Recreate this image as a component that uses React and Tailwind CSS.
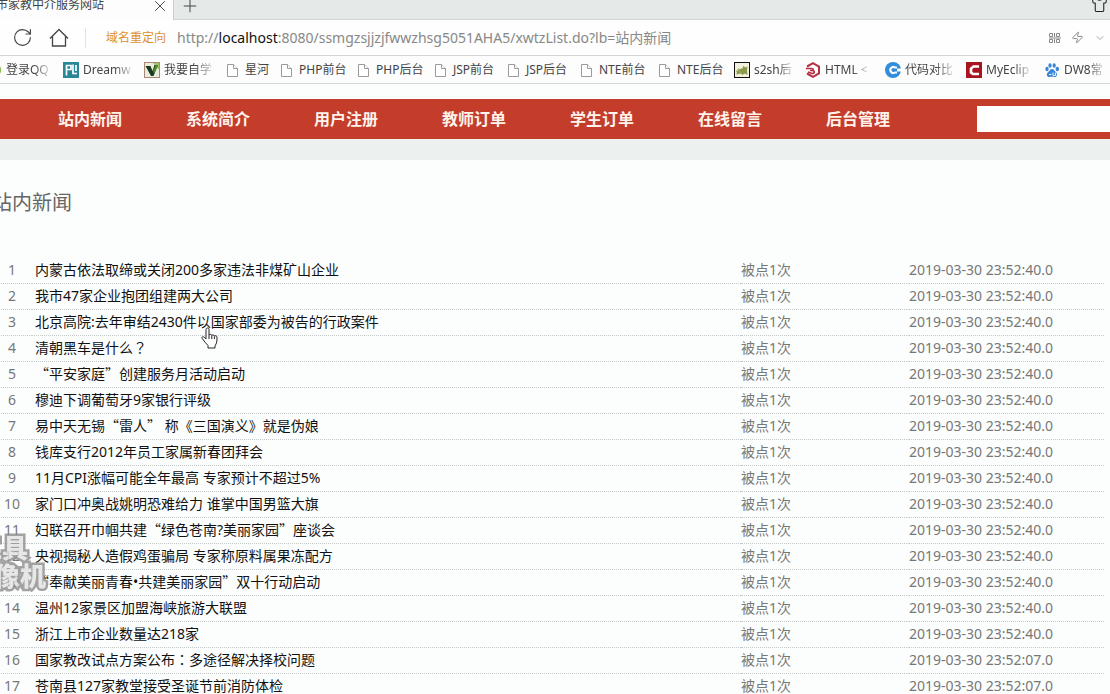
import { RotateCw, Plus, X, Shirt, Zap, ChevronDown } from 'lucide-react'

const NAV = ['站内新闻', '系统简介', '用户注册', '教师订单', '学生订单', '在线留言', '后台管理']

const BOOKMARKS = [
  { label: '登录QQ', icon: 'qq', width: 'w-[77px]', fade: true },
  { label: 'Dreamw', icon: 'dream', width: 'w-[81px]', fade: true },
  { label: '我要自学', icon: 'vee', width: 'w-[81px]', fade: true },
  { label: '星河', icon: 'page', width: 'w-[54px]' },
  { label: 'PHP前台', icon: 'page', width: 'w-[77px]' },
  { label: 'PHP后台', icon: 'page', width: 'w-[77px]' },
  { label: 'JSP前台', icon: 'page', width: 'w-[73px]' },
  { label: 'JSP后台', icon: 'page', width: 'w-[73px]' },
  { label: 'NTE前台', icon: 'page', width: 'w-[78px]' },
  { label: 'NTE后台', icon: 'page', width: 'w-[77px]' },
  { label: 's2sh后', icon: 's2sh', width: 'w-[71px]', fade: true },
  { label: 'HTML <', icon: 'html', width: 'w-[80px]', fade: true },
  { label: '代码对比', icon: 'compare', width: 'w-[81px]', fade: true },
  { label: 'MyEclip', icon: 'my', width: 'w-[78px]', fade: true },
  { label: 'DW8常', icon: 'paw', width: 'w-[72px]', fade: true },
]

const NEWS = [
  '内蒙古依法取缔或关闭200多家违法非煤矿山企业',
  '我市47家企业抱团组建两大公司',
  '北京高院:去年审结2430件以国家部委为被告的行政案件',
  '清朝黑车是什么？',
  '“平安家庭”创建服务月活动启动',
  '穆迪下调葡萄牙9家银行评级',
  '易中天无锡“雷人” 称《三国演义》就是伪娘',
  '钱库支行2012年员工家属新春团拜会',
  '11月CPI涨幅可能全年最高 专家预计不超过5%',
  '家门口冲奥战姚明恐难给力 谁掌中国男篮大旗',
  '妇联召开巾帼共建“绿色苍南?美丽家园”座谈会',
  '央视揭秘人造假鸡蛋骗局 专家称原料属果冻配方',
  '“奉献美丽青春•共建美丽家园”双十行动启动',
  '温州12家景区加盟海峡旅游大联盟',
  '浙江上市企业数量达218家',
  '国家教改试点方案公布：多途径解决择校问题',
  '苍南县127家教堂接受圣诞节前消防体检',
]

function BookmarkIcon({ name }) {
  const box = 'w-4 h-4 shrink-0'
  switch (name) {
    case 'qq':
      return (
        <svg viewBox="0 0 16 16" className={box}>
          <circle cx="8" cy="8" r="7" fill="#7cb342" />
          <circle cx="8" cy="8" r="3" fill="#e8f3d8" />
        </svg>
      )
    case 'dream':
      return (
        <svg viewBox="0 0 16 16" className={box}>
          <rect width="16" height="16" fill="#2a8796" />
          <path d="M3.500 13.500V3.500H8v4H3.500M10 2.500v9h4M13 3v6" fill="none" stroke="#fff" strokeWidth="1.700" />
        </svg>
      )
    case 'vee':
      return (
        <svg viewBox="0 0 16 16" className={box}>
          <rect x=".5" y=".5" width="15" height="15" fill="#e8eddf" stroke="#a98878" />
          <path d="M9 1h6v7z" fill="#a4c36a" />
          <path d="M1.500 4h5l2 5 2-6H14L9.500 14H7z" fill="#1d3a1c" />
          <path d="M9 9l2.500-6H14L10 12z" fill="#4e8c2c" />
        </svg>
      )
    case 's2sh':
      return (
        <svg viewBox="0 0 16 16" className={box}>
          <rect x=".5" y=".5" width="15" height="15" fill="#f4f2df" stroke="#111" />
          <path d="M2.500 12.500c0-4 3-6 6-6l1-3 1.500 2 2.500-1-.5 4 .5 4.500-3-1.500-2 1.500-2-1.500z" fill="#8a9a4a" />
          <path d="M2 10l3-4M5 9.500l3 1" fill="none" stroke="#a3ab6c" />
        </svg>
      )
    case 'html':
      return (
        <svg viewBox="0 0 16 16" className={box}>
          <path d="M2 4.500L8 1.200l6 3.300v7L8 14.800l-6-3.300" fill="none" stroke="#b62f45" strokeWidth="2" />
          <path d="M1 6.500h5.500c2.500 0 2.500 2 0 2H5h2c3 0 3 3 0 3L3 10" fill="none" stroke="#b62f45" strokeWidth="1.600" />
        </svg>
      )
    case 'compare':
      return (
        <svg viewBox="0 0 16 16" className={box}>
          <circle cx="8" cy="8" r="8" fill="#2f8ddb" />
          <path d="M12 5.500h-2a3 3 0 1 0 0 5h2" fill="none" stroke="#fff" strokeWidth="2" />
          <path d="M12 6.500h4v3h-4z" fill="#fff" />
        </svg>
      )
    case 'my':
      return (
        <svg viewBox="0 0 16 16" className={box}>
          <rect width="16" height="16" fill="#a81420" />
          <path d="M13 4.500H7.500L5 6.500v4l2 1.500h6" fill="none" stroke="#fff" strokeWidth="2.600" />
        </svg>
      )
    case 'paw':
      return (
        <svg viewBox="0 0 16 16" className={box} fill="#3a86d8">
          <ellipse cx="3" cy="7" rx="1.700" ry="2.200" />
          <ellipse cx="6" cy="3.500" rx="1.600" ry="2.300" />
          <ellipse cx="10.200" cy="3.500" rx="1.600" ry="2.300" />
          <ellipse cx="13.300" cy="7" rx="1.700" ry="2.200" />
          <path d="M8 7c2 0 2.500 2 4 3.200 2 1.800 1 4.800-1.500 4.800-1.500 0-3.500-.4-5 0C3 15.400 1.800 12 4 10.200 5.500 9 6 7 8 7z" />
          <path d="M5 12.500h2.500M9 10.500v3h2.500v-3" fill="none" stroke="#fff" strokeWidth=".9" />
        </svg>
      )
    default:
      return (
        <svg viewBox="0 0 16 16" className={box} fill="#fff" stroke="#9a9a9a">
          <path d="M2.500 2.500h6l4 4v8h-10z" />
          <path d="M8.500 2.500v4h4" />
        </svg>
      )
  }
}

// Curly quotes take a full character cell, the other full-width marks sit centred in theirs
function Title({ text }) {
  return text.split(/([“”？：])/).map((part, i) => {
    if (part === '“' || part === '”') {
      return <span key={i} className="font-['Noto_Sans_CJK_SC',sans-serif] leading-none">{part}</span>
    }
    if (part === '？' || part === '：') {
      return <span key={i} lang="zh-TW" className="font-['Noto_Sans_CJK_TC',sans-serif] leading-none">{part}</span>
    }
    return part
  })
}

function Browser() {
  return (
    <header className="text-[#444]">
      <div className="flex h-5 bg-[#e5eae8] border-b border-[#d0d4d2]">
        <div className="-mb-px flex w-[174px] items-start justify-between border-r border-[#c9cecc] bg-[#fcfdfc] pr-1">
          <span className="-ml-1 -mt-[3px] whitespace-nowrap text-xs leading-4">市家教中介服务网站</span>
          <button type="button" aria-label="关闭标签页" className="-mt-[3px]">
            <X size={18} strokeWidth={1.300} />
          </button>
        </div>
        <button type="button" aria-label="新建标签页" className="-mt-1 ml-1.5 self-start">
          <Plus size={20} strokeWidth={1.200} />
        </button>
        <button type="button" aria-label="皮肤" className="-mt-1 ml-auto mr-0.5 self-start text-[#222]">
          <Shirt size={17} strokeWidth={1.500} />
        </button>
      </div>

      <div className="flex h-9 items-center border-b border-[#d4d6d5] bg-[#fdfefd] pl-3">
        <button type="button" aria-label="刷新"><RotateCw size={21} strokeWidth={1.300} /></button>
        <button type="button" aria-label="主页" className="ml-4">
          <svg viewBox="0 0 20 20" className="h-5 w-5" fill="none" stroke="currentColor" strokeWidth="1.300">
            <path d="M1 10.500L10 1.500l9 9M3.500 8.500v9.500h13V8.500" />
          </svg>
        </button>
        <span className="ml-4 h-5 w-px bg-[#e2e2e2]" />
        <span className="ml-5 w-[71px] text-xs text-[#e0912f]">域名重定向</span>
        <p className="flex-1 whitespace-nowrap text-sm text-[#888]">
          http://<span className="text-[#111]">localhost</span>:8080/ssmgzsjjzjfwwzhsg5051AHA5/xwtzList.do?lb=站内新闻
        </p>
        <div className="flex items-center gap-2.5 pr-1 text-[#888]">
          <svg viewBox="0 0 12 12" className="h-3 w-3" fill="none" stroke="currentColor">
            <path d="M.5 1.500h3v3h-3zM5.500 1v4M7.500 1.500h3v3h-3zM0 6h12M.5 7.500h3v3h-3zM5.500 7v4M7.500 7.500h3v3h-3z" />
          </svg>
          <Zap size={13} strokeWidth={1.800} />
          <ChevronDown size={12} strokeWidth={1.500} />
        </div>
      </div>

      <nav className="flex h-7 items-center overflow-hidden border-b border-[#d4d6d5] bg-[#fcfdfc]">
        <div className="-ml-3.5 flex">
          {BOOKMARKS.map((b) => (
            <a key={b.label} href="#" className={`flex shrink-0 items-center gap-1 ${b.width}`}>
              <BookmarkIcon name={b.icon} />
              <span
                className={`whitespace-nowrap text-xs leading-5 ${b.fade ? '[mask-image:linear-gradient(to_right,#000_65%,#0003)]' : ''}`}
              >
                {b.label}
              </span>
            </a>
          ))}
        </div>
      </nav>
    </header>
  )
}

export default function App() {
  return (
    <div
      lang="zh-CN"
      className="relative h-screen overflow-hidden bg-[#fcfefd] font-['Noto_Sans','Noto_Sans_CJK_SC',sans-serif]"
    >
      <Browser />

      <nav className="mt-[15px] flex h-10 items-center bg-[#c43d2b] pl-[26px]">
        {NAV.map((item) => (
          <a key={item} href="#" className="w-32 shrink-0 text-center text-base font-bold text-[#fff3ec]">{item}</a>
        ))}
        <input type="search" aria-label="搜索" className="ml-[55px] h-[26px] min-w-0 flex-1 bg-white" />
      </nav>
      <div className="h-[21px] bg-[#ecf1ef]" />

      <main className="-ml-2 pr-1.5">
        <h1 className="pt-[29px] text-xl leading-7 text-[#666]">站内新闻</h1>
        <table className="mt-10 w-full table-fixed border-collapse text-sm leading-5 text-[#777]">
          <colgroup>
            <col className="w-10" />
            <col />
            <col className="w-[168px]" />
            <col className="w-[195px]" />
          </colgroup>
          <tbody>
            {NEWS.map((title, i) => (
              <tr key={title} className="h-[26px] border-b border-dotted border-[#c4c8c6]">
                <td className="text-center">{i + 1}</td>
                <td className="pl-[3px]"><a href="#" className="text-[#111]"><Title text={title} /></a></td>
                <td>被点1次</td>
                <td>{i < 15 ? '2019-03-30 23:52:40.0' : '2019-03-30 23:52:07.0'}</td>
              </tr>
            ))}
          </tbody>
        </table>
      </main>

      {/* recorder watermark */}
      <div className="absolute left-0 top-[534px] flex w-[46px] flex-col items-end text-[26px] font-black leading-7 text-[#e2e2e2] opacity-80 [-webkit-text-stroke:5px_#8c8c8c] [paint-order:stroke_fill]">
        <span className="mr-[18px] whitespace-nowrap">工具</span>
        <span className="whitespace-nowrap">录像机</span>
      </div>

      <svg viewBox="0 0 17 22" className="absolute left-[201px] top-[327px] h-[22px] w-[17px]">
        <path
          d="M5 2.500c0-2 3-2 3 0V8c.5-1 2.500-1 2.800.5.6-1 2.400-.7 2.600.6.8-.8 2.600-.3 2.600 1.200 0 4-.2 6-2 8.500V21H7v-2.500C5 16.500 3 14 1.200 11.500.3 10 2 9 3.200 10.200L5 12z"
          fill="#fff" stroke="#222"
        />
        <path d="M8 8v4M10.800 8.500V12M13.400 9.500V12" stroke="#222" />
      </svg>
    </div>
  )
}
